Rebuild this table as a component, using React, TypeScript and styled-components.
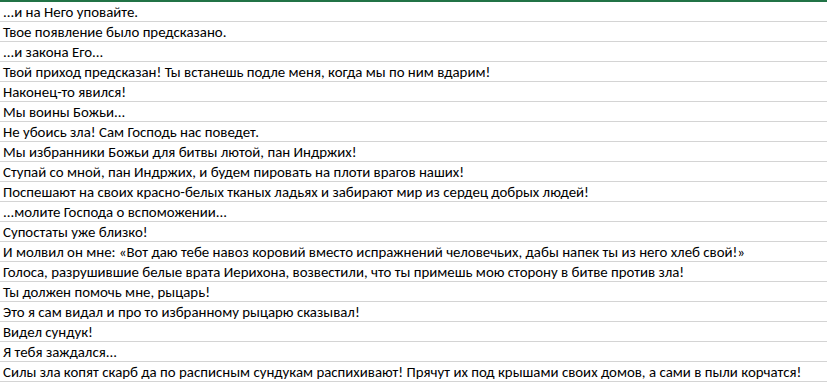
import React from 'react';
import styled, { createGlobalStyle } from 'styled-components';

const Global = createGlobalStyle`
    html, body {
        margin: 0;
        padding: 0;
        background: #ffffff;
    }
`;

const Sheet = styled.div`
    width: 827px;
    height: 390px;
    overflow: hidden;
    border-top: 2px solid #217346;
    background: #ffffff;
    font-family: Carlito, Calibri, Lato, "Liberation Sans", sans-serif;
    font-size: 14.85px;
    color: #000000;
`;

const Row = styled.div`
    height: 19px;
    border-bottom: 1px solid #d4d4d4;
    padding-left: 3px;
    display: flex;
    align-items: flex-end;
    white-space: nowrap;
    line-height: 18px;
`;

const lines = [
    '...и на Него уповайте.',
    'Твое появление было предсказано.',
    '...и закона Его...',
    'Твой приход предсказан! Ты встанешь подле меня, когда мы по ним вдарим!',
    'Наконец-то явился!',
    'Мы воины Божьи...',
    'Не убоись зла! Сам Господь нас поведет.',
    'Мы избранники Божьи для битвы лютой, пан Индржих!',
    'Ступай со мной, пан Индржих, и будем пировать на плоти врагов наших!',
    'Поспешают на своих красно-белых тканых ладьях и забирают мир из сердец добрых людей!',
    '...молите Господа о вспоможении...',
    'Супостаты уже близко!',
    'И молвил он мне: «Вот даю тебе навоз коровий вместо испражнений человечьих, дабы напек ты из него хлеб свой!»',
    'Голоса, разрушившие белые врата Иерихона, возвестили, что ты примешь мою сторону в битве против зла!',
    'Ты должен помочь мне, рыцарь!',
    'Это я сам видал и про то избранному рыцарю сказывал!',
    'Видел сундук!',
    'Я тебя заждался...',
    'Силы зла копят скарб да по расписным сундукам распихивают! Прячут их под крышами своих домов, а сами в пыли корчатся!',
    '',
];

export default function App() {
    return (
        <>
            <Global />
            <Sheet>
                {lines.map((text, i) => (
                    <Row key={i}>{text}</Row>
                ))}
            </Sheet>
        </>
    );
}
